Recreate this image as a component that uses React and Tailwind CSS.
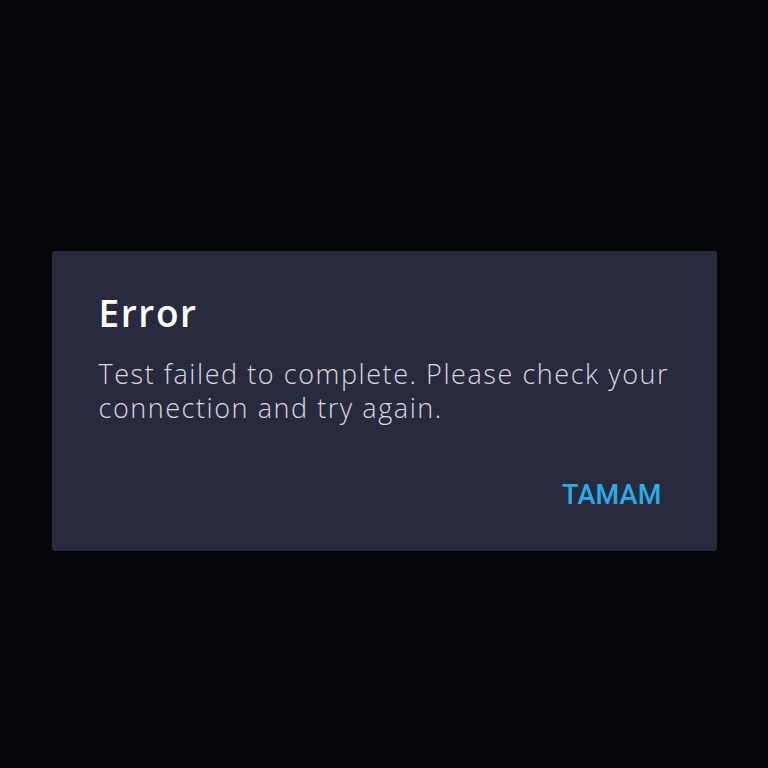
import React from 'react';

export default function App() {
    return (
        <div className="min-h-[768px] w-full bg-[#05060c] pt-[251px]">
            <div className="mx-auto w-[665px] h-[300px] rounded-[3px] bg-[#282a3e] pl-[47px] pr-[30px] pt-[38px] flex flex-col">
                <h2 className="text-[37px] leading-[48px] font-semibold tracking-[1.6px] text-white" style={{ fontFamily: '"Open Sans", sans-serif' }}>Error</h2>
                <p className="mt-[20px] text-[27px] leading-[34px] font-light tracking-[1.55px] text-[#d9d9e1]" style={{ fontFamily: '"Open Sans", sans-serif' }}>
                    Test failed to complete. Please check your connection and try again.
                </p>
                <div className="mt-auto mb-[40px] flex justify-end pr-[25px]">
                    <button className="text-[27px] leading-[32px] font-medium tracking-[0.2px] text-[#29ade9]" style={{ fontFamily: 'Roboto, sans-serif' }}>TAMAM</button>
                </div>
            </div>
        </div>
    );
}
